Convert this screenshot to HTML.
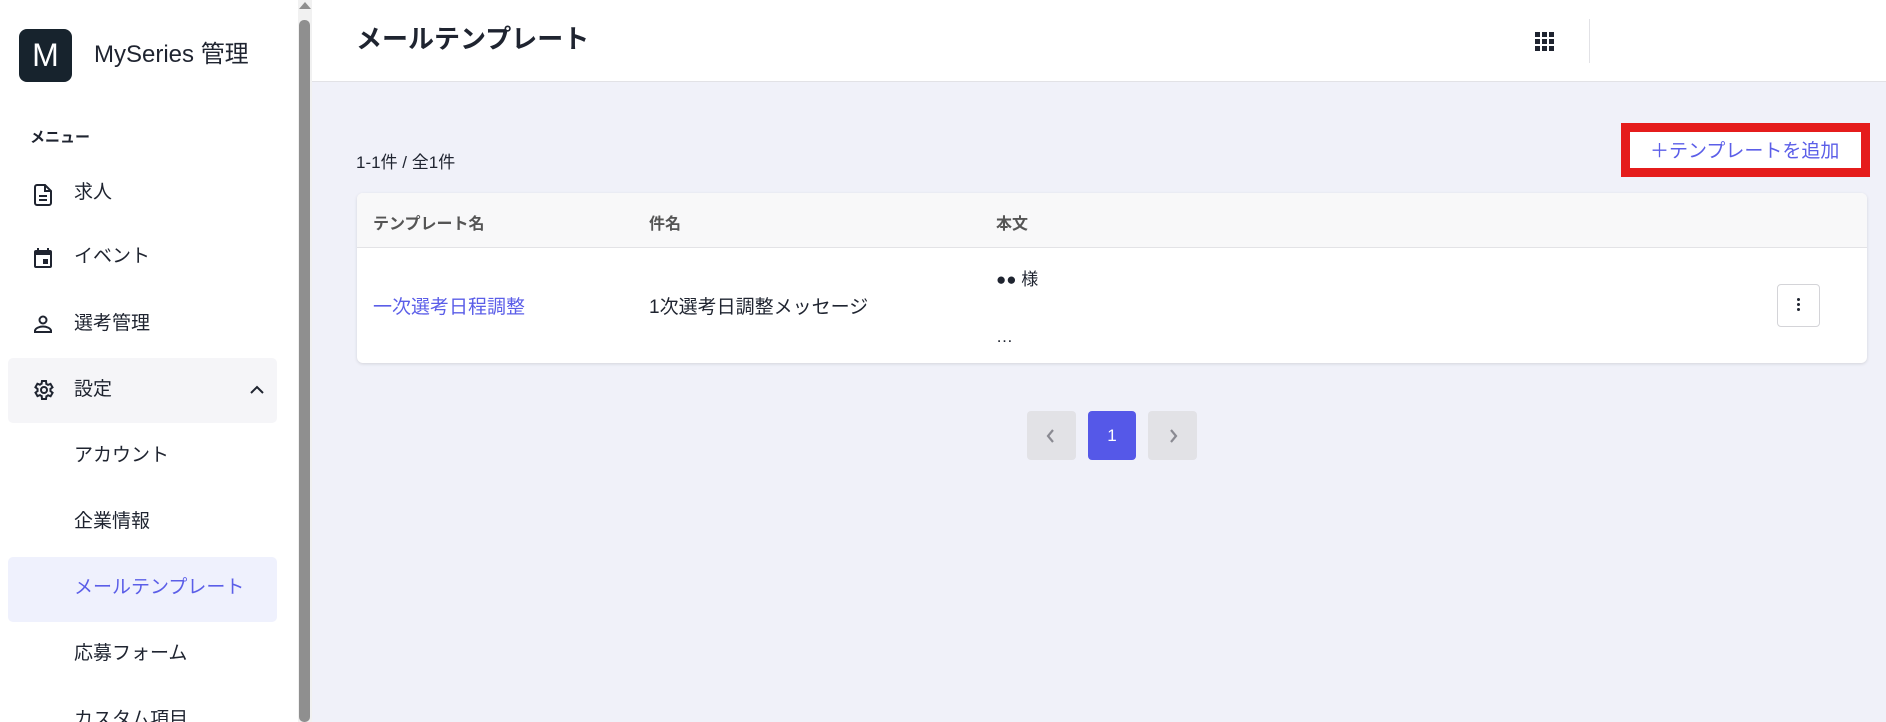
<!DOCTYPE html>
<html style="overflow:hidden;width:1886px;height:722px"><head><meta charset="utf-8"><style>
*{box-sizing:border-box;margin:0;padding:0}
html,body{overflow:hidden}
body{width:1886px;height:722px;max-height:722px;background:#f0f1f9;font-family:"Liberation Sans","Noto Sans CJK JP",sans-serif;color:#1f2430;position:relative}
.a{position:absolute}
.side{left:0;top:0;width:298px;height:722px;background:#fff}
.sb{left:298px;top:0;width:14px;height:722px;background:#f1f1f1}
.thumb{left:299px;top:20px;width:11px;height:702px;background:#8f8f8f;border-radius:5px}
.hdr{left:312px;top:0;width:1574px;height:82px;background:#fff;border-bottom:1px solid #e2e2e6}
.item{left:74px;font-size:19px;line-height:24px}
.ic{left:31px}
</style></head><body>
<div class="a side"></div>
<div class="a sb"></div>
<div class="a" style="left:299px;top:2px;width:0;height:0;border-left:6px solid transparent;border-right:6px solid transparent;border-bottom:7px solid #8f8f8f"></div>
<div class="a thumb"></div>
<div class="a" style="left:19px;top:29px;width:53px;height:53px;background:#17232d;border-radius:8px;color:#fff;font-size:32px;text-align:center;line-height:53px">M</div>
<div class="a" style="left:94px;top:40px;font-size:24px;line-height:30px;color:#1f2430">MySeries 管理</div>
<div class="a" style="left:30px;top:128px;font-size:15px;font-weight:bold;line-height:20px">メニュー</div>

<svg class="a ic" style="top:182px" width="24" height="26" viewBox="0 0 24 24"><path d="M14 2H6a2 2 0 0 0-2 2v16a2 2 0 0 0 2 2h12a2 2 0 0 0 2-2V8z" fill="none" stroke="#1f2430" stroke-width="2"/><path d="M14 2v6h6M8 13h8M8 17h8" stroke="#1f2430" stroke-width="2" fill="none"/></svg>
<div class="a item" style="top:181px">求人</div>
<svg class="a ic" style="top:246px" width="24" height="24" viewBox="0 0 24 24"><path d="M19 4h-1V2h-2v2H8V2H6v2H5a2 2 0 0 0-2 2v14a2 2 0 0 0 2 2h14a2 2 0 0 0 2-2V6a2 2 0 0 0-2-2zm0 16H5V9h14zM12 13h5v5h-5z" fill="#1f2430"/></svg>
<div class="a item" style="top:245px">イベント</div>
<svg class="a ic" style="top:312px" width="24" height="24" viewBox="0 0 24 24"><circle cx="12" cy="8" r="3.5" fill="none" stroke="#1f2430" stroke-width="2"/><path d="M4 20v-1c0-3 5-4.5 8-4.5s8 1.5 8 4.5v1z" fill="none" stroke="#1f2430" stroke-width="2"/></svg>
<div class="a item" style="top:312px">選考管理</div>
<div class="a" style="left:8px;top:358px;width:269px;height:65px;background:#f5f5f8;border-radius:5px"></div>
<svg class="a ic" style="top:378px" width="24" height="24" viewBox="0 0 24 24"><path d="M19.4 13a7.5 7.5 0 0 0 0-2l2.1-1.6-2-3.5-2.5 1a7 7 0 0 0-1.7-1L15 3h-4l-.4 2.7a7 7 0 0 0-1.7 1l-2.5-1-2 3.5L6.6 11a7.5 7.5 0 0 0 0 2l-2.1 1.6 2 3.5 2.5-1a7 7 0 0 0 1.700 1L11 21h4l.4-2.7a7 7 0 0 0 1.7-1l2.5 1 2-3.5z" fill="none" stroke="#1f2430" stroke-width="2"/><circle cx="13" cy="12" r="3" fill="none" stroke="#1f2430" stroke-width="2"/></svg>
<div class="a item" style="top:378px">設定</div>
<svg class="a" style="left:249px;top:384px" width="16" height="12" viewBox="0 0 16 12"><path d="M2 9l6-6 6 6" fill="none" stroke="#1f2430" stroke-width="2"/></svg>
<div class="a item" style="top:444px">アカウント</div>
<div class="a item" style="top:510px">企業情報</div>
<div class="a" style="left:8px;top:557px;width:269px;height:65px;background:#eff1fd;border-radius:5px"></div>
<div class="a item" style="top:576px;color:#5b5ee8">メールテンプレート</div>
<div class="a item" style="top:642px">応募フォーム</div>
<div class="a item" style="top:708px;height:14px;overflow:hidden">カスタム項目</div>

<div class="a hdr"></div>
<div class="a" style="left:356px;top:22px;font-size:26px;font-weight:bold;line-height:34px">メールテンプレート</div>
<svg class="a" style="left:1535px;top:32px" width="20" height="20" viewBox="0 0 20 20" fill="#1f2430"><rect x="0" y="0" width="5" height="5"/><rect x="7" y="0" width="5" height="5"/><rect x="14" y="0" width="5" height="5"/><rect x="0" y="7" width="5" height="5"/><rect x="7" y="7" width="5" height="5"/><rect x="14" y="7" width="5" height="5"/><rect x="0" y="14" width="5" height="5"/><rect x="7" y="14" width="5" height="5"/><rect x="14" y="14" width="5" height="5"/></svg>
<div class="a" style="left:1589px;top:19px;width:1px;height:44px;background:#e2e2e6"></div>

<div class="a" style="left:356px;top:152px;font-size:17px;line-height:22px">1-1件 / 全1件</div>
<div class="a" style="left:1621px;top:123px;width:249px;height:54px;border:9px solid #e51c1c;background:#fff"></div>
<div class="a" style="left:1650px;top:140px;font-size:19px;line-height:24px;color:#5b5ee8">＋テンプレートを追加</div>

<div class="a" style="left:357px;top:193px;width:1510px;height:170px;background:#fff;border-radius:6px;box-shadow:0 1px 3px rgba(0,0,0,.12);overflow:hidden">
<div class="a" style="left:0;top:0;width:100%;height:55px;background:#f8f8f9;border-bottom:1px solid #e3e3e6"></div>
<div class="a" style="left:16px;top:17px;font-size:16px;font-weight:bold;color:#555">テンプレート名</div>
<div class="a" style="left:292px;top:17px;font-size:16px;font-weight:bold;color:#555">件名</div>
<div class="a" style="left:639px;top:17px;font-size:16px;font-weight:bold;color:#555">本文</div>
<div class="a" style="left:16px;top:99px;font-size:19px;color:#5b5ee8">一次選考日程調整</div>
<div class="a" style="left:292px;top:99px;font-size:19px">1次選考日調整メッセージ</div>
<div class="a" style="left:639px;top:72px;font-size:17px">●● 様</div>
<div class="a" style="left:639px;top:134px;font-size:17px">…</div>
<div class="a" style="left:1420px;top:91px;width:43px;height:43px;border:1px solid #d4d4d8;border-radius:4px"></div>
<div class="a" style="left:1440px;top:105px;width:3px;height:3px;border-radius:2px;background:#1f2430;box-shadow:0 5px 0 #1f2430,0 10px 0 #1f2430"></div>
</div>

<div class="a" style="left:1027px;top:411px;width:49px;height:49px;background:#e2e2e6;border-radius:4px"></div>
<svg class="a" style="left:1044px;top:428px" width="14" height="16" viewBox="0 0 14 16"><path d="M9 2L4 8l5 6" fill="none" stroke="#8a8a92" stroke-width="2.2"/></svg>
<div class="a" style="left:1088px;top:411px;width:48px;height:49px;background:#5558e8;border-radius:4px;color:#fff;font-size:17px;text-align:center;line-height:49px">1</div>
<div class="a" style="left:1148px;top:411px;width:49px;height:49px;background:#e2e2e6;border-radius:4px"></div>
<svg class="a" style="left:1166px;top:428px" width="14" height="16" viewBox="0 0 14 16"><path d="M5 2l5 6-5 6" fill="none" stroke="#8a8a92" stroke-width="2.2"/></svg>
</body></html>
